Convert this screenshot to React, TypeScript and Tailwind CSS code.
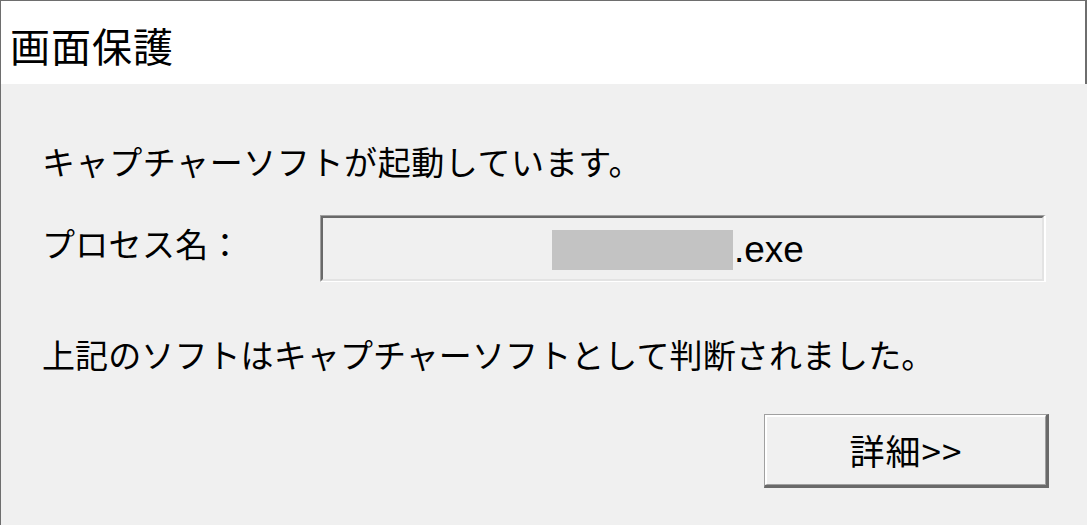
import React from "react";

const jp = { fontFamily: '"Noto Sans CJK JP", "Noto Sans", sans-serif' };

export default function App() {
  return (
    <div className="w-[1087px] h-[525px] overflow-hidden bg-[#f0f0f0] border-l border-t border-[#6e6e6e] flex flex-col text-black" style={jp}>
      <div className="h-[83px] bg-white border-r-2 border-[#6e6e6e] flex items-center pl-[9px]">
        <span className="text-[40px] leading-[48px] mt-[4px] tracking-[1px]">画面保護</span>
      </div>
      <div className="flex-1 flex flex-col pl-[41px]">
        <div className="mt-[57px] h-[40px] text-[33px] leading-[40px] tracking-[0.6px]">
          キャプチャーソフトが起動しています。
        </div>
        <div className="mt-[34px] flex items-start h-[67px]">
          <div className="w-[278px] mt-[8px] text-[33px] leading-[40px] tracking-[0.3px]">プロセス名：</div>
          <div className="w-[726px] h-[67px] border-t border-l border-[#a0a0a0] border-b border-r-[2px] border-b-white border-r-white">
            <div className="w-full h-full border-t-2 border-l-2 border-[#696969] border-b-2 border-r-2 border-b-[#e3e3e3] border-r-[#e3e3e3] flex items-center pl-[229px]">
              <div className="w-[181px] h-[40px] bg-[#c3c3c3] mt-[3px]" />
              <span className="text-[37px] leading-[40px] mt-[2px] ml-[1px]" style={{ fontFamily: '"Liberation Sans", Arial, sans-serif' }}>.exe</span>
            </div>
          </div>
        </div>
        <div className="mt-[52px] h-[40px] text-[33px] leading-[40px] tracking-[0.1px]">
          上記のソフトはキャプチャーソフトとして判断されました。
        </div>
        <div className="mt-[40px] flex justify-end pr-[38px]">
          <button className="w-[285px] h-[74px] border-t border-l border-[#a0a0a0] border-b-[3px] border-r-[3px] border-b-[#696969] border-r-[#696969] bg-[#f0f0f0] p-0">
            <div className="w-full h-full border-t-2 border-l-2 border-white border-b border-r border-b-[#a0a0a0] border-r-[#a0a0a0] flex items-center justify-center">
              <span className="text-[35px] leading-[40px] -mt-[2px] tracking-[1px]" style={jp}>詳細&gt;&gt;</span>
            </div>
          </button>
        </div>
      </div>
    </div>
  );
}
